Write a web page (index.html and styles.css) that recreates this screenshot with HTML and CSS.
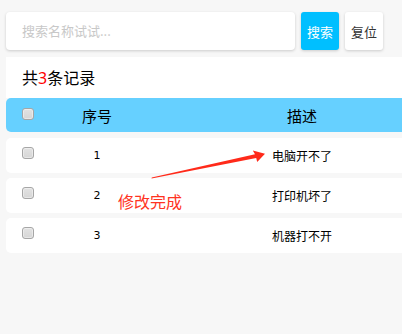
FILE: index.html
```html
<!DOCTYPE html>
<html lang="zh">
<head>
<meta charset="utf-8">
<title>记录列表</title>
<link rel="stylesheet" href="styles.css">
</head>
<body>
<div class="page">
  <div class="toolbar">
    <div class="search-input">搜索名称试试...</div>
    <button class="btn btn-search">搜索</button>
    <button class="btn btn-reset">复位</button>
  </div>
  <div class="info">共<span class="count">3</span>条记录</div>
  <div class="table">
    <div class="row head">
      <div class="cell check"><span class="box"></span></div>
      <div class="cell">序号</div>
      <div class="cell desc">描述</div>
    </div>
    <div class="row body-row">
      <div class="cell check"><span class="box"></span></div>
      <div class="cell num">1</div>
      <div class="cell desc">电脑开不了</div>
    </div>
    <div class="row body-row">
      <div class="cell check"><span class="box"></span></div>
      <div class="cell num">2</div>
      <div class="cell desc">打印机坏了</div>
    </div>
    <div class="row body-row">
      <div class="cell check"><span class="box"></span></div>
      <div class="cell num">3</div>
      <div class="cell desc">机器打不开</div>
    </div>
  </div>
</div>
<svg class="arrow" width="402" height="334" viewBox="0 0 402 334">
  <polygon points="151.5,178.6 151.8,177.4 255,154.2 252.8,150.6 265,153.8 257.2,162 256.2,158" fill="#ff2a1a"/>
</svg>
<div class="note">修改完成</div>
</body>
</html>
```
FILE: styles.css
```css
html, body {
  margin: 0;
  padding: 0;
  overflow: hidden;
}
body {
  background: #f7f7f7;
  font-family: "Noto Sans CJK SC", "Noto Sans", sans-serif;
  color: #000;
  width: 402px;
  height: 334px;
  position: relative;
}
.page {
  width: 396px;
  padding-left: 6px;
  padding-top: 12px;
}
.toolbar {
  display: flex;
  gap: 6px;
  height: 38px;
}
.search-input {
  width: 273px;
  height: 38px;
  background: #fff;
  border-radius: 4px;
  box-shadow: 0 1px 3px rgba(0, 0, 0, 0.18);
  padding-left: 16px;
  font-size: 13px;
  line-height: 38px;
  color: #c8c8c8;
}
.btn {
  width: 38px;
  height: 38px;
  border: none;
  border-radius: 3px;
  padding: 0;
  font-family: "Noto Sans CJK SC", sans-serif;
  font-size: 13px;
  box-shadow: 0 1px 3px rgba(0, 0, 0, 0.18);
}
.btn-search {
  background: #00bfff;
  color: #fff;
}
.btn-reset {
  background: #fff;
  color: #333;
}
.info {
  margin-top: 7px;
  height: 41px;
  background: #fff;
  padding-left: 16px;
  font-size: 16px;
  line-height: 41px;
}
.count {
  color: #f00;
  font-family: "Noto Sans", sans-serif;
}
.table {
  display: flex;
  flex-direction: column;
  gap: 5px;
}
.row {
  display: grid;
  grid-template-columns: 40px 102px 1fr;
  align-items: center;
  border-radius: 5px 0 0 5px;
  text-align: center;
}
.desc {
  padding-left: 54px;
}
.head {
  height: 34px;
  background: #66d0ff;
  font-size: 15px;
  margin-bottom: 1px;
}
.body-row {
  height: 35px;
  background: #fff;
  font-size: 12px;
}
.check {
  text-align: left;
  padding-left: 16px;
  display: flex;
}
.box {
  width: 10px;
  height: 10px;
  border: 1px solid #a6a6a6;
  border-radius: 3px;
  background: linear-gradient(#e2e2e2, #d6d6d6);
  box-shadow: inset 0 0 0 1px rgba(255, 255, 255, 0.4);
}
.head .box {
  margin-top: -2px;
}
.body-row .box {
  margin-top: -6px;
}
.num {
  font-family: "DejaVu Sans", sans-serif;
  font-size: 11px;
}
.arrow {
  position: absolute;
  left: 0;
  top: 0;
}
.note {
  position: absolute;
  left: 118px;
  top: 191px;
  font-size: 16px;
  line-height: 20px;
  color: #ff3322;
}
```
